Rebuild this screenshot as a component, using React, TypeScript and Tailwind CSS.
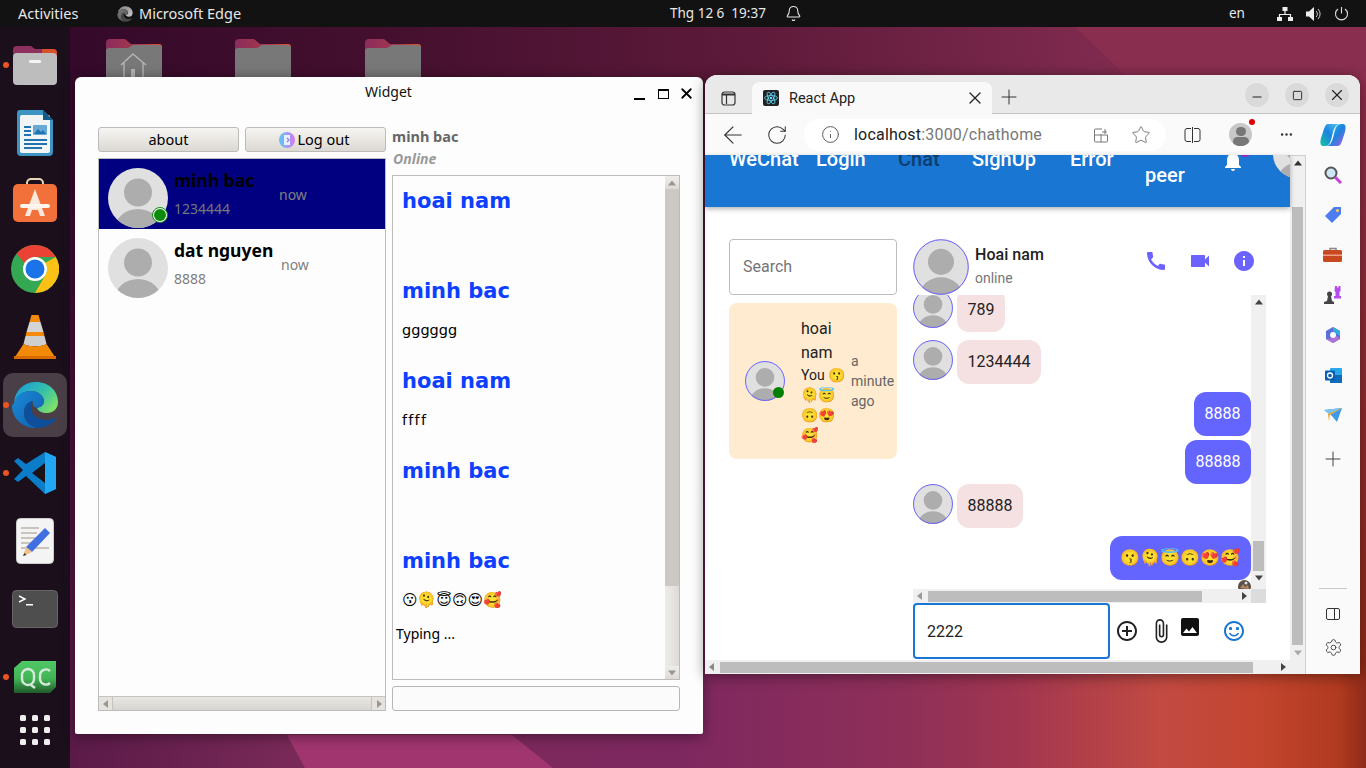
import React from "react";
import { ArrowLeft, RotateCw, Info, Star, Plus, X, Minus, Square, Bell, Settings, MoreHorizontal } from "lucide-react";
import { MdCall, MdVideocam, MdInfo, MdAddCircleOutline, MdAttachFile, MdImage, MdSentimentSatisfiedAlt, MdNotifications } from "react-icons/md";

const Tri = ({ d, c = "#555", s = 8 }: { d: "u" | "d" | "l" | "r"; c?: string; s?: number }) => {
  const pts = { u: "4,1.5 8,6.5 0,6.5", d: "0,1.5 8,1.5 4,6.5", l: "6,0 6,8 1,4", r: "2,0 2,8 7,4" }[d];
  return (
    <svg width={s} height={s} viewBox="0 0 8 8" className="shrink-0">
      <polygon points={pts} fill={c} />
    </svg>
  );
};

const Avatar = ({ size, ring }: { size: number; ring?: boolean }) => {
  const id = React.useId();
  return (
    <svg width={size} height={size} viewBox="0 0 60 60" className="block shrink-0">
      <clipPath id={id}><circle cx="30" cy="30" r="30" /></clipPath>
      <g clipPath={`url(#${id})`}>
        <rect width="60" height="60" fill="#e0e0e0" />
        <circle cx="30" cy="24.5" r="14" fill="#adadad" />
        <ellipse cx="30" cy="61" rx="23" ry="20" fill="#adadad" />
      </g>
      {ring && <circle cx="30" cy="30" r="29.2" fill="none" stroke="#6c63ff" strokeWidth={60 / size * 1} />}
    </svg>
  );
};

const Folder = ({ home }: { home?: boolean }) => (
  <svg width="58" height="60" viewBox="0 0 58 60" className="block">
    <defs>
      <linearGradient id="ftab" x1="0" x2="1"><stop offset="0" stopColor="#8a2c5c" /><stop offset="0.6" stopColor="#a8384a" /><stop offset="1" stopColor="#e8552a" /></linearGradient>
    </defs>
    <path d="M1 6a4 4 0 0 1 4-4h15l6 5h28a3 3 0 0 1 3 3v30H1z" fill="url(#ftab)" />
    <path d="M1 14a3 3 0 0 1 3-3h19l5-3h26a3 3 0 0 1 3 3v49H1z" fill="#787878" />
    {home && (
      <g fill="none" stroke="#b5b5b5" strokeWidth="1.4">
        <path d="M16 28 L28 17 L41 28" /><path d="M19 26 V42 H38 V26" />
        <rect x="26" y="32" width="4" height="10" fill="#b5b5b5" stroke="none" />
      </g>
    )}
  </svg>
);

const EdgeLogo = ({ size = 48, gray }: { size?: number; gray?: boolean }) => (
  <svg width={size} height={size} viewBox="0 0 48 48" className="block" style={gray ? { filter: "grayscale(1)" } : undefined}>
    <defs>
      <linearGradient id="eg1" x1="0.1" y1="0.1" x2="1" y2="0.7"><stop offset="0" stopColor="#1d9ed8" /><stop offset="0.55" stopColor="#35c1a8" /><stop offset="1" stopColor="#7ee06a" /></linearGradient>
      <linearGradient id="eg2" x1="0" y1="0" x2="1" y2="1"><stop offset="0" stopColor="#1b8ad6" /><stop offset="1" stopColor="#0f5fb0" /></linearGradient>
    </defs>
    <path d="M3 22C4 9 13 1 25 1c13 0 22 9 22 20 0 7-5 11-11 11-5 0-9-2-10-5 4-1 7-3 7-7 0-5-6-10-13-10C11 10 5 15 3 22z" fill="url(#eg1)" />
    <path d="M3 22C5 14 12 10 20 10c7 0 13 5 13 10 0 3-3 6-7 7-3-1-5-4-4-7-6 1-9 6-9 12 0 7 5 13 13 15C13 48 1 38 1 25c0-1 2-2 2-3z" fill="url(#eg2)" />
    <path d="M22 20c-6 1-9 6-9 12 0 7 5 13 13 15 9 0 16-4 20-11-3 2-7 3-11 3-8 0-15-5-15-12 0-3 1-5 2-7z" fill="#0e4f9c" />
  </svg>
);

const ico = {
  files: (
    <svg width="46" height="42" viewBox="0 0 46 42">
      <path d="M1 6a4 4 0 0 1 4-4h14l4 3h18a4 4 0 0 1 4 4v10H1z" fill="#8e3060" />
      <path d="M30 5h11a4 4 0 0 1 4 4v6H30z" fill="#d9502c" />
      <rect x="1" y="9" width="44" height="32" rx="4" fill="#bdbdbd" />
      <rect x="17" y="16" width="12" height="3" rx="1" fill="#f4f4f4" />
    </svg>
  ),
  writer: (
    <svg width="38" height="46" viewBox="0 0 38 46">
      <path d="M3 0h24l10 10v32a4 4 0 0 1-4 4H5a4 4 0 0 1-4-4V3a3 3 0 0 1 2-3z" fill="#3d94c2" />
      <rect x="4" y="5" width="30" height="38" rx="2" fill="#f2f4f6" />
      <path d="M27 0l10 10H27z" fill="#135a86" />
      <rect x="8" y="16" width="7" height="2" fill="#1f73b0" /><rect x="8" y="20" width="7" height="2" fill="#1f73b0" /><rect x="8" y="24" width="7" height="2" fill="#1f73b0" />
      <rect x="17" y="15" width="14" height="10" rx="1" fill="#6aa9d4" /><path d="M18 24l4-5 3 3 2-2 3 4z" fill="#1f73b0" />
      <rect x="8" y="29" width="23" height="2" fill="#1f73b0" /><rect x="8" y="33" width="23" height="2" fill="#1f73b0" /><rect x="8" y="37" width="18" height="2" fill="#1f73b0" />
    </svg>
  ),
  store: (
    <svg width="46" height="46" viewBox="0 0 46 46">
      <path d="M15 8V5a4 4 0 0 1 4-4h8a4 4 0 0 1 4 4v3" fill="none" stroke="#e8d5b5" strokeWidth="2" />
      <rect x="1" y="6" width="44" height="38" rx="5" fill="#f2703a" />
      <path d="M23 11l-10 27h5l2-6h6l2 6h5z" fill="#fde8dc" />
      <rect x="8" y="26" width="30" height="4" rx="2" fill="#fff5ee" />
    </svg>
  ),
  chrome: (
    <svg width="48" height="48" viewBox="0 0 48 48">
      <circle cx="24" cy="24" r="24" fill="#34a853" />
      <path d="M24 0a24 24 0 0 1 20.8 12H24a12 12 0 0 0-10.4 6L5.500 8.800A24 24 0 0 1 24 0z" fill="#ea4335" />
      <path d="M44.800 12A24 24 0 0 1 24 48l10.400-18A12 12 0 0 0 34 18z" fill="#fbc116" />
      <circle cx="24" cy="24" r="12" fill="#fff" /><circle cx="24" cy="24" r="9.500" fill="#1a73e8" />
    </svg>
  ),
  vlc: (
    <svg width="42" height="46" viewBox="0 0 42 46">
      <path d="M17.500 1h7l2 7h-11z" fill="#f58a0a" />
      <path d="M15.500 8h11l3 10h-17z" fill="#d4d4d4" />
      <path d="M12.500 18h17l1 4h-19z" fill="#f58a0a" />
      <path d="M11.500 22h19l2 8c-4 3-19 3-23 0z" fill="#cfcfcf" />
      <path d="M9.500 30c4 3 19 3 23 0l8.500 13H1z" fill="#f28a08" />
      <rect x="0" y="42" width="42" height="3" fill="#d86a00" />
    </svg>
  ),
  vscode: (
    <svg width="44" height="44" viewBox="0 0 44 44">
      <path d="M32 1l11 5v32l-11 5-19-18-8 6-4-3 9-9-9-9 4-3 8 6z" fill="#0a7cc8" />
      <path d="M32 1l11 5v32l-11 5z" fill="#22a7f2" />
      <path d="M32 12L19 22l13 10z" fill="#1b1117" />
    </svg>
  ),
  edit: (
    <svg width="38" height="46" viewBox="0 0 38 46">
      <rect x="0.500" y="0.500" width="37" height="45" rx="4" fill="#f4f4f4" stroke="#ccc" />
      <g fill="#c9c5bc"><rect x="5" y="9" width="18" height="2" /><rect x="5" y="14" width="16" height="2" /><rect x="5" y="19" width="14" height="2" /><rect x="5" y="24" width="12" height="2" /><rect x="5" y="29" width="28" height="2" /></g>
      <path d="M29 10l5 5-18 19-6-5z" fill="#3f6fe0" />
      <path d="M10 29l6 5-9 4z" fill="#f0c088" />
      <path d="M7 38l1.500-3 2 2z" fill="#333" />
    </svg>
  ),
  term: (
    <svg width="46" height="38" viewBox="0 0 46 38">
      <rect x="0.500" y="0.500" width="45" height="37" rx="4" fill="#4e4e4e" stroke="#666" />
      <path d="M7 6l6 3-6 3" fill="none" stroke="#fff" strokeWidth="1.400" />
      <rect x="14" y="14" width="7" height="1.500" fill="#fff" />
    </svg>
  ),
  qc: (
    <svg width="42" height="32" viewBox="0 0 42 32">
      <defs><linearGradient id="qcg" x1="0" y1="0" x2="0" y2="1"><stop offset="0" stopColor="#50c866" /><stop offset="0.55" stopColor="#41b555" /><stop offset="1" stopColor="#1f5a2a" /></linearGradient></defs>
      <path d="M8 0h34v26l-6 6H0V7z" fill="url(#qcg)" />
      <path d="M14 8a6 6 0 0 0-6 7v3a6 6 0 0 0 6 6 6 6 0 0 0 6-6v-3a6 6 0 0 0-6-7zM17 24l4 3M36 10a6 6 0 0 0-10 4v4a6 6 0 0 0 10 4" fill="none" stroke="#d6e8da" strokeWidth="2.400" />
    </svg>
  ),
};

const DockItem = ({ children, dot, active, h = 68 }: { children: React.ReactNode; dot?: boolean; active?: boolean; h?: number }) => (
  <div className="relative w-[70px] flex items-center justify-center shrink-0" style={{ height: h }}>
    {active && <div className="absolute left-[3px] top-[2px] w-[64px] h-[64px] rounded-[10px] bg-[#4a3f47]" />}
    {dot && <div className="absolute left-[3px] top-[31px] w-[6px] h-[6px] rounded-full bg-[#e95420] z-10" />}
    <div className="relative">{children}</div>
  </div>
);

const QtScrollBtn = ({ d }: { d: "u" | "d" | "l" | "r" }) => (
  <div className="w-[14px] h-[13px] flex items-center justify-center bg-gradient-to-b from-[#f0eeeb] to-[#dedbd6] shrink-0"><Tri d={d} c="#9a9792" /></div>
);

const Msg = ({ name, h = 90, children }: { name: string; h?: number; children?: React.ReactNode }) => (
  <div style={{ height: h }} className="pl-[9px]">
    <div className="font-['DejaVu_Sans'] font-bold text-[21px] leading-[30px] text-[#0c3fff]">{name}</div>
    <div className="mt-[14px] h-[20px] font-['DejaVu_Sans'] text-[14.500px] leading-[20px] text-black">{children}</div>
  </div>
);

const Widget = () => (
  <div className="absolute left-[75px] top-[77px] w-[628px] h-[657px] bg-[#fdfdfd] rounded-t-[6px] rounded-b-[2px] shadow-[0_2px_14px_rgba(0,0,0,0.45)] flex flex-col font-['Noto_Sans'] text-black">
    <div className="h-[50px] shrink-0 relative">
      <div className="pt-[5px] text-center text-[14px] leading-[20px] text-[#111] pr-[1px]">Widget</div>
      <div className="absolute left-[559px] top-[8px] flex items-center">
        <div className="w-[11px] h-[14px] flex items-end"><div className="w-[11px] h-[2px] bg-black mb-[1px]" /></div>
        <div className="ml-[13px] w-[11px] h-[10px] border border-black border-t-[2px]" />
        <X size={17} strokeWidth={2.600} color="#000" className="ml-[9px]" />
      </div>
    </div>
    <div className="flex gap-[6px] pl-[23px]">
      <div className="w-[288px] h-[584px] flex flex-col">
        <div className="flex gap-[6px] h-[25px] shrink-0">
          <div className="w-[141px] border border-[#bbb] rounded-[3px] bg-gradient-to-b from-[#f7f5f2] to-[#dcd9d3] flex items-center justify-center text-[14.500px]">about</div>
          <div className="w-[141px] border border-[#bbb] rounded-[3px] bg-gradient-to-b from-[#f7f5f2] to-[#dcd9d3] flex items-center justify-center text-[14.500px] gap-[2px] pr-[2px]">
            <svg width="16" height="16" viewBox="0 0 16 16"><defs><linearGradient id="lg" x1="0" x2="1"><stop offset="0" stopColor="#5cc8f5" /><stop offset="1" stopColor="#d878f0" /></linearGradient></defs><circle cx="8" cy="8" r="8" fill="url(#lg)" /><path d="M5 3h6v10H5z" fill="#e8f0ff" /><path d="M8 6l2 2-2 2" stroke="#8a7fe8" strokeWidth="1.200" fill="none" /></svg>
            <span>Log out</span>
          </div>
        </div>
        <div className="mt-[6px] flex-1 border border-[#bcbcbc] flex flex-col min-h-0">
          <div className="flex-1 min-h-0">
            <div className="h-[70px] bg-[#000080] flex pl-[9px] relative">
              <div className="pt-[9px] relative">
                <Avatar size={60} />
                <div className="absolute left-[44px] top-[48px] w-[16px] h-[16px] rounded-full border border-[#0a8a0a] bg-white flex items-center justify-center"><div className="w-[12px] h-[12px] rounded-full bg-[#0b8a0b]" /></div>
              </div>
              <div className="pl-[6px]">
                <div className="mt-[9px] font-bold text-[17.500px] leading-[24px] text-black">minh bac</div>
                <div className="mt-[7px] text-[14px] leading-[20px] text-[#777]">1234444</div>
              </div>
              <div className="absolute left-[180px] top-[26px] text-[14px] leading-[20px] text-[#808080]">now</div>
            </div>
            <div className="h-[70px] flex pl-[9px] relative">
              <div className="pt-[9px]"><Avatar size={60} /></div>
              <div className="pl-[6px]">
                <div className="mt-[9px] font-bold text-[17.500px] leading-[24px] text-black">dat nguyen</div>
                <div className="mt-[7px] text-[14px] leading-[20px] text-[#808080]">8888</div>
              </div>
              <div className="absolute left-[182px] top-[26px] text-[14px] leading-[20px] text-[#808080]">now</div>
            </div>
          </div>
          <div className="h-[14px] flex items-center border-t border-[#c4c4c4]">
            <div className="w-[14px] h-full flex items-center justify-center bg-[#e6e3df] border-r border-[#c4c4c4]"><Tri d="l" c="#9a9792" /></div>
            <div className="flex-1 h-full bg-gradient-to-b from-[#e8e6e1] to-[#d9d6d1]" />
            <div className="w-[14px] h-full flex items-center justify-center bg-[#e6e3df] border-l border-[#c4c4c4]"><Tri d="r" c="#9a9792" /></div>
          </div>
        </div>
      </div>
      <div className="w-[288px] flex flex-col h-[584px]">
        <div className="h-[48px] shrink-0 -mt-[1px] mb-[1px]">
          <div className="font-bold text-[14.500px] leading-[20px] text-[#666]">minh bac</div>
          <div className="mt-[4px] pl-[1px] font-bold italic text-[14px] leading-[18px] text-[#999]">Online</div>
        </div>
        <div className="h-[505px] shrink-0 border border-[#bcbcbc] flex bg-[#fdfdfd]">
          <div className="flex-1 pt-[10px]">
            <Msg name="hoai nam" />
            <Msg name="minh bac">gggggg</Msg>
            <Msg name="hoai nam"><span className="tracking-[1.200px]">ffff</span></Msg>
            <Msg name="minh bac" />
            <Msg name="minh bac" h={78}>
              <span className="font-['DejaVu_Sans','Noto_Color_Emoji',sans-serif] text-[15px]">😗🫠😇🙃😍🥰</span>
            </Msg>
            <div className="pl-[3px] text-[14px] leading-[20px] text-black">Typing ...</div>
          </div>
          <div className="w-[14px] flex flex-col bg-[#dedbd6]">
            <QtScrollBtn d="u" />
            <div className="h-[397px] bg-[#ccc9c5]" />
            <div className="flex-1 bg-gradient-to-r from-[#eeece9] to-[#dedbd6]" />
            <QtScrollBtn d="d" />
          </div>
        </div>
        <div className="mt-[6px] h-[25px] border border-[#b8b8b8] rounded-[3px] bg-[#fbfbfb]" />
      </div>
    </div>
  </div>
);

const Bubble = ({ me, children, w, h = 44, r }: { me?: boolean; children: React.ReactNode; w?: number; h?: number; r?: string }) => (
  <div style={{ width: w, height: h }} className={`rounded-[12px] flex items-center justify-center text-[16px] ${me ? "bg-[#6464ff] text-white" : "bg-[#f5e1e1] text-[#222]"} ${r || ""}`}>{children}</div>
);

const SideIcon = ({ children }: { children: React.ReactNode }) => <div className="h-[40px] flex items-center justify-center shrink-0">{children}</div>;

const Edge = () => (
  <div className="absolute left-[705px] top-[75px] w-[655px] h-[599px] rounded-t-[12px] overflow-hidden shadow-[0_2px_14px_rgba(0,0,0,0.45)] flex flex-col font-['Roboto'] bg-white">
    {/* tab strip */}
    <div className="h-[39px] bg-[#e9e9e9] border-b border-[#c4c4c4] flex items-end shrink-0 relative">
      <div className="w-[47px] h-full flex items-center justify-center pt-[8px]">
        <svg width="15" height="15" viewBox="0 0 15 15" fill="none" stroke="#333" strokeWidth="1.200"><rect x="1" y="1" width="13" height="13" rx="2.500" /><path d="M5.500 3v10" /><path d="M1 3.500h13" strokeWidth="2" /></svg>
      </div>
      <div className="w-[240px] h-[32px] bg-[#f9f9f9] rounded-t-[8px] flex items-center pl-[11px] pr-[7px] text-[#222] translate-y-[1px]">
        <svg width="16" height="16" viewBox="0 0 16 16" className="shrink-0"><rect width="16" height="16" rx="2" fill="#222" /><g fill="none" stroke="#61dafb" strokeWidth="0.800"><ellipse cx="8" cy="8" rx="6.500" ry="2.500" /><ellipse cx="8" cy="8" rx="6.500" ry="2.500" transform="rotate(60 8 8)" /><ellipse cx="8" cy="8" rx="6.500" ry="2.500" transform="rotate(120 8 8)" /></g><circle cx="8" cy="8" r="1.300" fill="#61dafb" /></svg>
        <span className="ml-[10px] text-[14.500px] flex-1 pt-[1px]">React App</span>
        <X size={20} strokeWidth={1.500} color="#222" />
      </div>
      <div className="ml-[5px] h-[32px] flex items-center"><Plus size={24} strokeWidth={1} color="#333" /></div>
      <div className="absolute right-[11px] top-[8px] flex gap-[16px]">
        <div className="w-[24px] h-[24px] rounded-full bg-[#dadada] flex items-center justify-center"><Minus size={14} color="#222" strokeWidth={1.800} className="translate-y-[2px]" /></div>
        <div className="w-[24px] h-[24px] rounded-full bg-[#dadada] flex items-center justify-center"><Square size={11} color="#222" strokeWidth={2} /></div>
        <div className="w-[24px] h-[24px] rounded-full bg-[#dadada] flex items-center justify-center"><X size={18} color="#222" strokeWidth={1.500} /></div>
      </div>
    </div>
    {/* toolbar */}
    <div className="h-[41px] bg-[#fafafa] flex items-center shrink-0 relative">
      <div className="w-[56px] flex justify-center"><ArrowLeft size={28} strokeWidth={1} color="#333" /></div>
      <div className="w-[32px] flex justify-center"><RotateCw size={22} strokeWidth={1.100} color="#333" /></div>
      <div className="ml-[11px] w-[362px] h-[32px] rounded-full bg-white flex items-center">
        <Info size={19} strokeWidth={1.200} color="#555" className="ml-[17px]" />
        <span className="ml-[14px] text-[16px] text-[#222] tracking-[0.2px]">localhost<span className="text-[#777]">:3000/chathome</span></span>
        <span className="ml-auto mr-[15px] flex items-center gap-[22px]">
          <svg width="16" height="16" viewBox="0 0 16 16" fill="none" stroke="#777" strokeWidth="1"><path d="M9 2H2.500a1 1 0 0 0-1 1v11a1 1 0 0 0 1 1h11a1 1 0 0 0 1-1V8H1.500M8 7v8M9 5h5M12 2v5" /></svg>
          <Star size={20} strokeWidth={1} color="#666" />
        </span>
      </div>
      <div className="ml-[18px]">
        <svg width="17" height="16" viewBox="0 0 17 16" fill="none" stroke="#333" strokeWidth="1"><path d="M7 1.500H3a2 2 0 0 0-2 2v9a2 2 0 0 0 2 2h4M10 1.500h4a2 2 0 0 1 2 2v9a2 2 0 0 1-2 2h-4M8.500 0v16" /></svg>
      </div>
      <div className="ml-[28px] relative w-[23px] h-[23px] rounded-full bg-[#c8c8c8] overflow-hidden flex flex-col items-center">
        <div className="mt-[4px] w-[10px] h-[10px] rounded-full bg-[#777]" />
        <div className="mt-[1px] w-[16px] h-[10px] rounded-full bg-[#777]" />
      </div>
      <div className="absolute left-[544px] top-[5px] w-[6px] h-[6px] rounded-full bg-[#e00000]" />
      <div className="ml-[27px]"><MoreHorizontal size={15} color="#333" /></div>
      <div className="ml-[26px]">
        <svg width="26" height="24" viewBox="0 0 26 24"><defs><linearGradient id="cp1" x1="0" y1="1" x2="1" y2="0"><stop offset="0" stopColor="#16c7a0" /><stop offset="0.5" stopColor="#1b83e0" /><stop offset="1" stopColor="#50c8f0" /></linearGradient><linearGradient id="cp2" x1="0" y1="0" x2="1" y2="1"><stop offset="0" stopColor="#34d0e0" /><stop offset="0.5" stopColor="#1b83e0" /><stop offset="1" stopColor="#b05ce0" /></linearGradient></defs><path d="M8 1h11c-3 1-5 4-6 8l-2 8c-1 4-3 6-6 6H3c-3 0-3-4-2-8L4 6c1-3 2-5 4-5z" fill="url(#cp1)" /><path d="M18 23H7c3-1 5-4 6-8l2-8c1-4 3-6 6-6h2c3 0 3 4 2 8l-3 9c-1 3-2 5-5 5z" fill="url(#cp2)" /></svg>
      </div>
    </div>
    <div className="flex-1 flex min-h-0">
      {/* viewport */}
      <div className="w-[600px] flex flex-col">
        <div className="flex flex-1 min-h-0">
          <div className="w-[585px] flex flex-col bg-white">
            {/* app bar */}
            <div className="h-[52px] shrink-0 bg-[#1976d2] shadow-[0_2px_5px_rgba(0,0,0,0.3)] overflow-hidden relative z-10">
              <div className="flex pl-[24px] -mt-[8px] text-[20px] leading-[24px] font-medium text-white">
                <div className="w-[87px] shrink-0">WeChat</div>
                <div className="w-[82px] shrink-0">Login</div>
                <div className="w-[74px] shrink-0 text-[#0d3c6e]">Chat</div>
                <div className="w-[98px] shrink-0">SignUp</div>
                <div className="w-[75px] shrink-0">Error</div>
                <div className="w-[76px] shrink-0 pt-[16px]">peer</div>
                <div className="w-[52px] shrink-0 relative -mt-[1px] pt-[3px]">
                  <MdNotifications size={24} color="#fff" />
                  <div className="absolute left-[17px] -top-[3px] w-[14px] h-[14px] rounded-full bg-[#9c27b0]" />
                </div>
                <div className="-mt-[17px] shrink-0"><Avatar size={48} /></div>
              </div>
            </div>
            {/* page body */}
            <div className="flex pl-[24px] pt-[32px] gap-[16px] flex-1 min-h-0">
              <div className="w-[168px] shrink-0 flex flex-col gap-[8px]">
                <div className="h-[56px] border border-[#bdbdbd] rounded-[4px] flex items-center pl-[13px] text-[16px] text-[#757575]">Search</div>
                <div className="h-[156px] rounded-[8px] bg-[#ffebcf] flex relative">
                  <div className="ml-[16px] mt-[58px] relative h-[40px]">
                    <Avatar size={40} ring />
                    <div className="absolute left-[28px] top-[26px] w-[11px] h-[11px] rounded-full bg-[#008000]" />
                  </div>
                  <div className="ml-[16px] w-[50px] pt-[14px]">
                    <div className="text-[16px] leading-[24px] text-[#222]">hoai nam</div>
                    <div className="text-[14px] leading-[20px] text-[#222] font-['Roboto','Noto_Color_Emoji',sans-serif]">You 😗🫠😇🙃😍🥰</div>
                  </div>
                  <div className="absolute left-[122px] top-[48px] w-[46px] text-[14px] leading-[20px] text-[#666]">a minute ago</div>
                </div>
              </div>
              <div className="w-[353px] shrink-0 flex flex-col">
                <div className="h-[56px] flex shrink-0 relative">
                  <Avatar size={56} ring />
                  <div className="ml-[6px]">
                    <div className="mt-[5px] text-[16px] leading-[22px] font-medium text-[#222] tracking-[0.05px]">Hoai nam</div>
                    <div className="mt-[2px] text-[14px] leading-[20px] text-[#777]">online</div>
                  </div>
                  <div className="ml-auto mr-[10px] mt-[10px] flex gap-[20px] h-[24px]">
                    <MdCall size={24} color="#6c63ff" />
                    <MdVideocam size={24} color="#6c63ff" />
                    <MdInfo size={24} color="#6c63ff" />
                  </div>
                </div>
                <div className="h-[308px] shrink-0 flex flex-col">
                  <div className="h-[294px] flex">
                    <div className="w-[338px] overflow-hidden">
                      <div className="-mt-[7px] flex flex-col">
                        <div className="flex gap-[4px] h-[44px]"><Avatar size={40} ring /><Bubble w={48}>789</Bubble></div>
                        <div className="flex gap-[4px] h-[44px] mt-[8px]"><Avatar size={40} ring /><Bubble w={84}>1234444</Bubble></div>
                        <div className="flex justify-end mt-[8px]"><Bubble me w={57}>8888</Bubble></div>
                        <div className="flex justify-end mt-[4px]"><Bubble me w={66}>88888</Bubble></div>
                        <div className="flex gap-[4px] h-[44px]"><Avatar size={40} ring /><Bubble w={66}>88888</Bubble></div>
                        <div className="flex justify-end mt-[8px]"><Bubble me w={141}><span className="font-['Noto_Color_Emoji',sans-serif]">😗🫠😇🙃😍🥰</span></Bubble></div>
                        <div className="flex justify-end mt-[0px]">
                          <svg width="13" height="13" viewBox="0 0 13 13" className="block"><circle cx="6.500" cy="6.500" r="6.500" fill="#5a5048" /><path d="M2 8l3-4 2 3 3-2 1 4z" fill="#b08a60" /><circle cx="8" cy="3" r="1.500" fill="#e0e0e0" /></svg>
                        </div>
                      </div>
                    </div>
                    <div className="w-[15px] bg-[#f0f0f0] flex flex-col items-center">
                      <div className="h-[14px] flex items-center"><Tri d="u" c="#444" /></div>
                      <div className="mt-[232px] w-[11px] h-[30px] bg-[#bdbdbd]" />
                      <div className="h-[14px] flex items-center"><Tri d="d" c="#444" /></div>
                    </div>
                  </div>
                  <div className="h-[14px] flex">
                    <div className="w-[338px] bg-[#f0f0f0] flex items-center pl-[3px]">
                      <Tri d="l" c="#999" />
                      <div className="ml-[4px] w-[274px] h-[11px] bg-[#bdbdbd]" />
                      <div className="ml-auto mr-[3px]"><Tri d="r" c="#444" /></div>
                    </div>
                    <div className="w-[15px] bg-[#dcdcdc]" />
                  </div>
                </div>
                <div className="h-[56px] flex shrink-0 relative">
                  <div className="w-[197px] border-2 border-[#1976d2] rounded-[4px] flex items-center pl-[12px] pt-[1px] text-[16px] text-[#222]">2222</div>
                  <MdAddCircleOutline size={24} color="#222" className="ml-[5px] mt-[16px]" />
                  <MdAttachFile size={26} color="#222" className="ml-[9px] mt-[15px]" />
                  <MdImage size={24} color="#111" className="ml-[4px] mt-[12px]" />
                  <MdSentimentSatisfiedAlt size={24} color="#1976d2" className="ml-[20px] mt-[16px]" />
                </div>
              </div>
            </div>
          </div>
          <div className="w-[15px] bg-[#f0f0f0] flex flex-col items-center border-t border-[#d0d0d0]">
            <div className="h-[14px] flex items-center"><Tri d="u" c="#333" /></div>
            <div className="mt-[37px] w-[11px] flex-1 bg-[#bdbdbd]" />
            <div className="h-[15px] flex items-center"><Tri d="d" c="#aaa" /></div>
          </div>
        </div>
        <div className="h-[14px] bg-[#f0f0f0] flex items-center pl-[3px] shrink-0">
          <Tri d="l" c="#888" />
          <div className="ml-[4px] w-[533px] h-[11px] bg-[#bdbdbd]" />
          <div className="ml-[26px]"><Tri d="r" c="#444" /></div>
        </div>
      </div>
      {/* sidebar */}
      <div className="flex-1 bg-[#fafafa] border-l border-[#d0d0d0] flex flex-col">
        <SideIcon><svg width="18" height="18" viewBox="0 0 18 18"><circle cx="7" cy="7" r="5.500" fill="#cfe6f5" stroke="#555" strokeWidth="2" /><path d="M11 11l6 6" stroke="#c43fd8" strokeWidth="3" /></svg></SideIcon>
        <SideIcon><svg width="18" height="18" viewBox="0 0 18 18"><path d="M10 1h7v7l-9 9-7-7z" fill="#4c7cf0" /><circle cx="13.500" cy="4.500" r="1.500" fill="#f6d24a" /></svg></SideIcon>
        <SideIcon><svg width="20" height="16" viewBox="0 0 20 16"><path d="M7 4V1.500h6V4" fill="none" stroke="#888" strokeWidth="1.500" /><rect y="3" width="19" height="12" rx="1.500" fill="#c8481f" /><rect y="7.500" width="19" height="1.500" fill="#f0a080" /></svg></SideIcon>
        <SideIcon><svg width="18" height="20" viewBox="0 0 18 20"><path d="M11 1h2v1.500h1.500V1h2v5l-1 1v4h1.500v2.500H10V11h1.500V7l-1-1z" fill="#b44cf0" /><circle cx="5.500" cy="9" r="2.500" fill="#444" /><path d="M4 11h3l1 5 2 1v2H0v-2l3-1z" fill="#444" /></svg></SideIcon>
        <SideIcon><svg width="18" height="18" viewBox="0 0 18 18"><path d="M9 1l7 4v8l-7 4-7-4V5z" fill="#5b6fd8" /><path d="M9 1l7 4v5l-7-4z" fill="#34a8e0" /><path d="M2 13l7 4 7-4-3-3-4 2z" fill="#b070d8" /><circle cx="9" cy="9" r="3" fill="#fafafa" /></svg></SideIcon>
        <SideIcon><svg width="17" height="17" viewBox="0 0 17 17"><rect x="5" y="1" width="12" height="15" rx="1" fill="#28a8ea" /><rect x="5" y="8" width="12" height="8" fill="#0f6cbd" /><rect y="3.500" width="10" height="10" rx="1" fill="#0a5fb0" /><circle cx="5" cy="8.500" r="2.500" fill="none" stroke="#fff" strokeWidth="1.300" /></svg></SideIcon>
        <SideIcon><svg width="18" height="14" viewBox="0 0 18 14"><path d="M0 2l18-2-5 14-5-6z" fill="#3d9ae8" /><path d="M0 2l18-2L6 7z" fill="#7cc4f4" /><path d="M4 6l14-6-12 7-1 6z" fill="#f2a81e" /></svg></SideIcon>
        <div className="h-[48px] flex items-center justify-center shrink-0"><Plus size={24} strokeWidth={1} color="#444" /></div>
        <div className="mt-auto mx-[13px] h-px bg-[#c8c8c8]" />
        <div className="h-[45px] flex items-center justify-center mt-[2px]"><svg width="14" height="12" viewBox="0 0 14 12" fill="none" stroke="#333" strokeWidth="1"><rect x="0.500" y="0.500" width="13" height="11" rx="1.500" /><path d="M8.500 0.500v11" /></svg></div>
        <div className="h-[35px] flex items-start justify-center pt-[2px] mb-[3px]"><Settings size={19} strokeWidth={1.200} color="#444" /></div>
      </div>
    </div>
  </div>
);

export default function App() {
  return (
    <div className="relative w-[1366px] h-[768px] overflow-hidden bg-[#300a24] font-['Noto_Sans']">
      <svg className="absolute left-0 top-0" width="1366" height="768" viewBox="0 0 1366 768">
        <defs>
          <linearGradient id="wallb" x1="0" x2="1">
            <stop offset="0.05" stopColor="#5a1a48" />
            <stop offset="0.22" stopColor="#7a2a58" />
            <stop offset="0.5" stopColor="#7e2860" />
            <stop offset="0.66" stopColor="#8e2f58" />
            <stop offset="0.74" stopColor="#a03550" />
            <stop offset="0.85" stopColor="#c24a42" />
            <stop offset="0.92" stopColor="#c4452f" />
            <stop offset="0.98" stopColor="#b03a20" />
            <stop offset="1" stopColor="#8f2a18" />
          </linearGradient>
          <linearGradient id="wallt" x1="0" x2="1">
            <stop offset="0.05" stopColor="#34092a" />
            <stop offset="0.3" stopColor="#46102f" />
            <stop offset="0.55" stopColor="#5e1a3a" />
            <stop offset="0.8" stopColor="#7e2a4e" />
            <stop offset="1" stopColor="#8e2e4e" />
          </linearGradient>
          <linearGradient id="fade" x1="0" y1="0" x2="0" y2="1">
            <stop offset="0.1" stopColor="#fff" />
            <stop offset="0.88" stopColor="#000" />
          </linearGradient>
          <mask id="fadem"><rect width="1366" height="768" fill="url(#fade)" /></mask>
        </defs>
        <rect width="1366" height="768" fill="url(#wallb)" />
        <rect width="1366" height="768" fill="url(#wallt)" mask="url(#fadem)" />
        <polygon points="1075,27 1366,27 1366,75 1125,75" fill="#8a2e4f" />
        <polygon points="287,735 512,735 553,768 305,768" fill="#a03570" />
      </svg>

      {/* top bar */}
      <div className="absolute left-0 top-0 w-[1366px] h-[27px] bg-[#121212] flex items-center text-[14.500px] text-[#e8e8e8]">
        <div className="ml-[18px] w-[99px]">Activities</div>
        <EdgeLogo size={16} gray />
        <div className="ml-[6px] w-[531px]">Microsoft Edge</div>
        <div className="w-[115px] text-[13.500px] whitespace-pre">Thg 12 6  19:37</div>
        <Bell size={17} strokeWidth={1.500} color="#e8e8e8" />
        <div className="ml-[427px] text-[13.500px] w-[15px]">en</div>
        <div className="ml-[33px]">
          <svg width="16" height="14" viewBox="0 0 16 14" fill="#eee" className="block"><rect x="5.500" y="0" width="5" height="4" /><rect x="0" y="10" width="5" height="4" /><rect x="11" y="10" width="5" height="4" /><path d="M8 4v3M2.500 10V7.500h11V10" fill="none" stroke="#eee" strokeWidth="1.200" /></svg>
        </div>
        <div className="ml-[13px]">
          <svg width="15" height="14" viewBox="0 0 15 14" fill="#eee" className="block"><path d="M0 4.500h3L8 0v14L3 9.500H0z" /><path d="M10 4a4 4 0 0 1 0 6M12 2a7 7 0 0 1 0 10" fill="none" stroke="#ccc" strokeWidth="1" /></svg>
        </div>
        <div className="ml-[13px]">
          <svg width="15" height="15" viewBox="0 0 15 15" fill="none" stroke="#ddd" strokeWidth="1.100" className="block"><path d="M7.500 1v6.500M4 3a6 6 0 1 0 7 0" /></svg>
        </div>
      </div>

      {/* dock */}
      <div className="absolute left-0 top-[27px] w-[70px] h-[741px] bg-[#1b0f1b] flex flex-col pt-[4px]">
        <DockItem dot>{ico.files}</DockItem>
        <DockItem>{ico.writer}</DockItem>
        <DockItem>{ico.store}</DockItem>
        <DockItem>{ico.chrome}</DockItem>
        <DockItem>{ico.vlc}</DockItem>
        <DockItem dot active><EdgeLogo size={48} /></DockItem>
        <DockItem dot>{ico.vscode}</DockItem>
        <DockItem>{ico.edit}</DockItem>
        <DockItem>{ico.term}</DockItem>
        <DockItem dot>{ico.qc}</DockItem>
        <div className="grid grid-cols-3 gap-[6px] w-[30px] mx-auto mt-[4px]">
          {[0, 1, 2, 3, 4, 5, 6, 7, 8].map((i) => <div key={i} className="w-[6px] h-[6px] rounded-[1.500px] bg-[#eee]" />)}
        </div>
      </div>

      {/* desktop folders */}
      <div className="absolute left-[105px] top-[37px]"><Folder home /></div>
      <div className="absolute left-[234px] top-[37px]"><Folder /></div>
      <div className="absolute left-[364px] top-[37px]"><Folder /></div>

      <Widget />
      <Edge />
    </div>
  );
}
